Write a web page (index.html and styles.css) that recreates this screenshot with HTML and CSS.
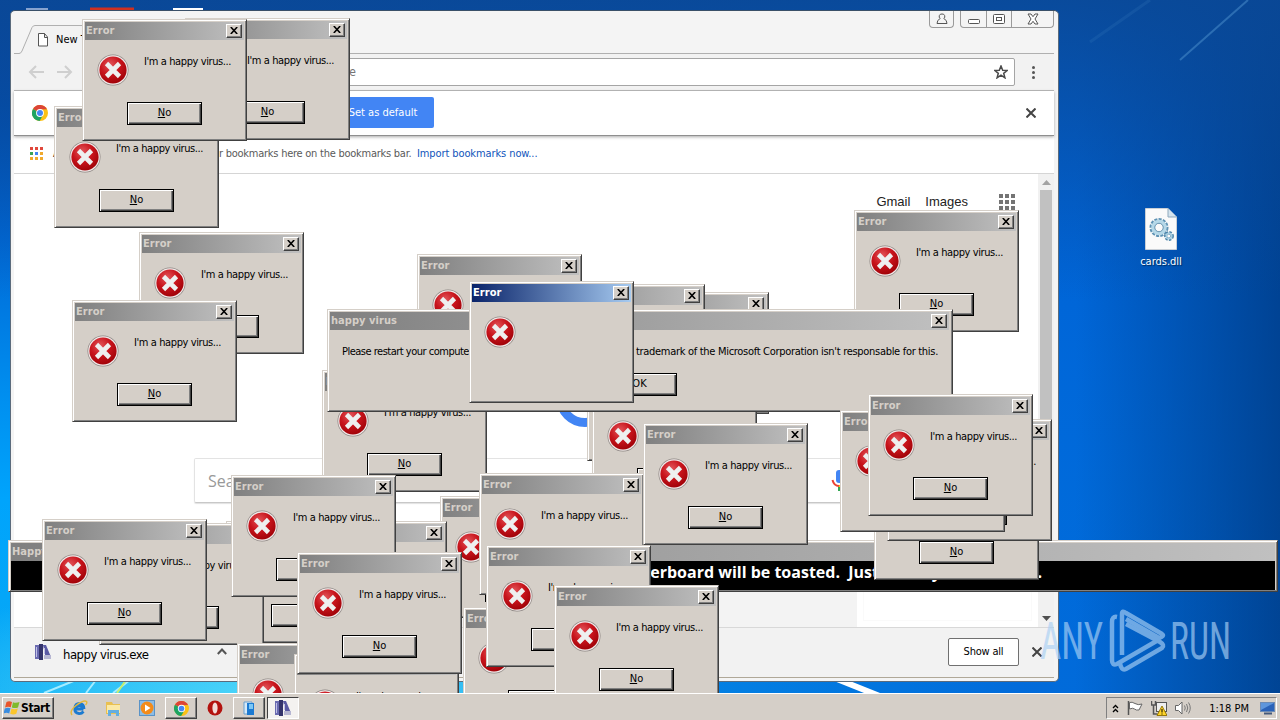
FILE: index.html
```
<!DOCTYPE html>
<html lang="en">
<head>
<meta charset="utf-8">
<title>Desktop</title>
<link rel="stylesheet" href="styles.css">
</head>
<body>

<svg class="defs">
    <defs>
        <radialGradient id="redBall" cx="40%" cy="30%" r="75%">
            <stop offset="0" stop-color="#e2555a"/>
            <stop offset="0.5" stop-color="#c8141c"/>
            <stop offset="1" stop-color="#9c0006"/>
        </radialGradient>
    </defs>
    <symbol id="errorIcon" viewBox="0 0 32 32">
        <circle cx="16" cy="16" r="15.5" fill="#8d8683"/>
        <circle cx="16" cy="16" r="14.8" fill="#f1e9e8"/>
        <circle cx="16" cy="16" r="13.6" fill="url(#redBall)"/>
        <path d="M9.5 9.5 22.5 22.5M22.5 9.5 9.5 22.5" stroke="#eef0f0" stroke-width="4.6"/>
    </symbol>
    <symbol id="closeX" viewBox="0 0 8 7">
        <path d="M.8 0 7.2 7M7.2 0 .8 7" stroke="#000" stroke-width="1.6"/>
    </symbol>
    <symbol id="chromeIcon" viewBox="0 0 16 16">
        <circle cx="8" cy="8" r="8" fill="#fbc116"/>
        <path d="M8 8 1 4A8 8 0 0 1 15 4.2L8 4.4Z" fill="#dc4437"/>
        <path d="M1 4A8 8 0 0 0 7.6 16L11 10 8 8Z" fill="#1da462"/>
        <circle cx="8" cy="8" r="3.9" fill="#fff"/>
        <circle cx="8" cy="8" r="3" fill="#4587f3"/>
    </symbol>
    <symbol id="exeIcon" viewBox="0 0 16 16">
        <path d="M0 1h4v14H0z" fill="#6a6ab0"/>
        <path d="M4 0h4v16H4z" fill="#34346c"/>
        <path d="M8 1h3l5 12v2h-5z" fill="#5a5aa4"/>
        <path d="M9 11h7v4H9z" fill="#b6b6d2"/>
        <path d="M1.5 3v10M9.5 4v6" stroke="#c0c0e6"/>
    </symbol>
</svg>

<div class="desktop" id="desktop">
    <svg class="wallpaper" viewBox="0 0 1280 693">
        <path d="M1180 60 1248 0" stroke="#4f93cf" stroke-width="2" opacity=".5"/>
        <path d="M1090 42 1150 0" stroke="#3d80c0" stroke-width="3" opacity=".2"/>
        <path d="M834 681 850 681 880 693 864 693Z" fill="#fff"/>
        <path d="M44 693 76 680M86 693 96 680M113 693 130 680" stroke="#a5ecff" stroke-width="2"/>
        <path d="M117 693 126 680" stroke="#c3ef6e" stroke-width="2"/>
        <path d="M26 9h22" stroke="#87a3cf" stroke-width="2"/>
        <path d="M90 9h44" stroke="#cf3020" stroke-width="3"/>
        <path d="M173 9h30" stroke="#fff" stroke-width="2"/>
    </svg>

    <div class="file">
        <svg width="32" height="42" viewBox="0 0 32 42">
            <path d="M.5.5H23L31.5 9V41.5H.5Z" fill="#fafafa" stroke="#c9cfd6"/>
            <path d="M23 .5V9h8.500" fill="#d5e4ee" stroke="#8fa9bd"/>
            <circle cx="14" cy="19.500" r="7" fill="none" stroke="#5f93b4" stroke-width="5" stroke-dasharray="2.600 1"/>
            <circle cx="14" cy="19.500" r="6" fill="none" stroke="#b5d8e8" stroke-width="3.500"/>
            <circle cx="14" cy="19.500" r="4.200" fill="none" stroke="#4b7f9f" stroke-width=".8"/>
            <circle cx="24" cy="28" r="3.200" fill="none" stroke="#4b83a8" stroke-width="3.500" stroke-dasharray="2 1"/>
            <circle cx="24" cy="28" r="2.800" fill="none" stroke="#a5cde0" stroke-width="1.500"/>
        </svg>
        <span>cards.dll</span>
    </div>

    <div class="browser">
        <div class="tabstrip">
            <svg class="tab" width="240" height="29" viewBox="0 0 240 29">
                <path d="M0 28.500H6L18 2.500Q19 .5 21 .5H240V29H0Z" fill="#f2f2f2"/>
                <path d="M0 28.500H5Q7 28.500 8 26L18 2.500Q19 .5 21 .5H240" fill="none" stroke="#b0b0b0"/>
                <path d="M24.500 8.500h6l3 3.500v9h-9zM30.500 8.500v4h3" fill="#fff" stroke="#555"/>
            </svg>
            <span class="tab-title">New Tab</span>
            <div class="caption">
                <div class="cap user">
                    <svg width="12" height="12" viewBox="0 0 12 12"><path d="M6 1a2.500 2.500 0 0 1 1.800 4.500Q11 7 11 10.500H1Q1 7 4.200 5.500A2.500 2.500 0 0 1 6 1Z" fill="none" stroke="#555"/></svg>
                </div>
                <div class="cap-group">
                    <div class="cap"><svg width="12" height="12" viewBox="0 0 12 12"><rect x=".5" y="6.500" width="11" height="4" rx="1" fill="#fff" stroke="#555"/></svg></div>
                    <div class="cap"><svg width="12" height="12" viewBox="0 0 12 12"><rect x=".5" y="1.500" width="11" height="9" rx="1" fill="#fff" stroke="#555"/><rect x="3.500" y="4.500" width="5" height="3" fill="none" stroke="#555"/></svg></div>
                    <div class="cap wide"><svg width="12" height="12" viewBox="0 0 12 12"><path d="M1 1h3l2 2.700L8 1h3L8 6l3 5H8L6 8.300 4 11H1l3-5Z" fill="#fff" stroke="#555"/></svg></div>
                </div>
            </div>
        </div>
        <div class="toolbar">
            <svg width="46" height="16" viewBox="0 0 46 16"><path d="M16 8H2M8 2 2 8l6 6M29 8h14M37 2l6 6-6 6" fill="none" stroke="#cfcfcf" stroke-width="2"/></svg>
            <div class="omnibox">
                <span>Search Google, or drag a page here</span>
                <svg width="14" height="14" viewBox="0 0 14 14"><path d="M7 1 8.700 5.300 13.200 5.500 9.700 8.300 10.900 12.800 7 10.200 3.100 12.800 4.300 8.300.8 5.500 5.300 5.300Z" fill="none" stroke="#4a4a4a" stroke-width="1.500"/></svg>
            </div>
            <div class="dots"><i></i><i></i><i></i></div>
        </div>
        <div class="infobar">
            <svg width="16" height="16"><use href="#chromeIcon"/></svg>
            <button class="blue-btn">Set as default</button>
            <svg class="bar-x" width="10" height="10" viewBox="0 0 10 10"><path d="M.5.5l9 9M9.500.5l-9 9" stroke="#444" stroke-width="2"/></svg>
        </div>
        <div class="bookmarks">
            <div class="apps"><i></i><i></i><i></i><i></i><i></i><i></i><i></i><i></i><i></i></div>
            <span class="apps-label">Apps</span>
            <span class="hint">r bookmarks here on the bookmarks bar.</span>
            <a>Import bookmarks now...</a>
        </div>
        <div class="page">
            <div class="page-main">
                <div class="google-nav">
                    <span>Gmail</span>
                    <span>Images</span>
                    <div class="launcher"><i></i><i></i><i></i><i></i><i></i><i></i><i></i><i></i><i></i></div>
                </div>
                <svg class="g-logo" width="60" height="60" viewBox="0 0 60 60"><circle cx="30" cy="30" r="24.500" fill="none" stroke="#4285f4" stroke-width="9"/></svg>
                <div class="searchbox">
                    <span>Search Google or type a URL</span>
                    <svg width="16" height="24" viewBox="0 0 16 24"><rect x="5" y="1" width="7" height="13" rx="3" fill="#4285f4"/><path d="M1.500 11Q3 17 8 17" fill="none" stroke="#ea4335" stroke-width="2"/><path d="M8 17q5 0 7-6" fill="none" stroke="#fbbc05" stroke-width="2"/><path d="M8 18v4" stroke="#34a853" stroke-width="2"/></svg>
                </div>
                <div class="page-foot"><div class="promo"></div></div>
            </div>
            <div class="scrollbar">
                <svg width="9" height="5" viewBox="0 0 9 5"><path d="M0 5 4.500 0 9 5Z" fill="#a3a3a3"/></svg>
                <div class="thumb"></div>
                <svg width="9" height="5" viewBox="0 0 9 5"><path d="M0 0H9L4.500 5Z" fill="#505050"/></svg>
            </div>
        </div>
        <div class="shelf">
            <svg width="16" height="16"><use href="#exeIcon"/></svg>
            <span class="dl-name">happy virus.exe</span>
            <svg class="chev" width="10" height="7" viewBox="0 0 10 7"><path d="M.8 6 5 1.500 9.200 6" fill="none" stroke="#555" stroke-width="2"/></svg>
            <button class="show-all">Show all</button>
            <svg width="10" height="10" viewBox="0 0 10 10"><path d="M.5.5l9 9M9.500.5l-9 9" stroke="#444" stroke-width="2"/></svg>
        </div>
    </div>

    <svg class="watermark" width="196" height="64" viewBox="0 0 196 64">
        <g fill="#a9d0f5" font-family="Roboto, sans-serif" font-size="52">
            <text x="2" y="50" textLength="63" lengthAdjust="spacingAndGlyphs">ANY</text>
            <text x="132" y="50" textLength="61" lengthAdjust="spacingAndGlyphs">RUN</text>
        </g>
        <g fill="none" stroke="#a9d0f5" stroke-width="4.500">
            <path d="M79 8Q74 7 74 13V51Q74 57 79 55L122 30"/>
            <path d="M84 46V5Q84 1 88 4L124 25Q127 27 121 29L88 10"/>
            <path d="M82 54Q83 62 88 60L124 39Q127 36 122 33L88 15"/>
        </g>
    </svg>

    <div class="win banner">
        <div class="title"><span>Happy virus</span></div>
        <div class="banner-body">
            <span class="b1">Your motherboard will be toasted.&nbsp; Just</span>
            <span class="b2">try to restart it.</span>
        </div>
    </div>
</div>

<div class="taskbar">
    <div class="start">
        <svg width="16" height="16" viewBox="0 0 16 16">
            <path d="M2.500 2Q5 .5 8 2L6.800 7.200Q4 6 1 7.400Z" fill="#e8542a"/>
            <path d="M9 2.300Q12 3.500 15.500 2L14 7.500Q11 8.600 7.800 7.500Z" fill="#7fba2c"/>
            <path d="M.8 8.400Q4 7 6.500 8.300L5.200 13.500Q2.500 12-.5 13.500Z" fill="#3a8de0"/>
            <path d="M7.500 8.600Q10.500 9.800 13.800 8.500L12.300 13.800Q9.500 15 6.200 13.800Z" fill="#fbc62c"/>
        </svg>
        <b>Start</b>
    </div>
    <div class="tasks">
        <div class="task">
            <svg width="18" height="16" viewBox="0 0 18 16"><path d="M13.500 9H5.500Q6 5.500 9 5.500T12.500 8M13.500 11.500Q11.500 13.800 9 13.500 4.500 13 4.800 8.500 5.200 3.500 9.500 3.500 14 4 14 9" fill="none" stroke="#1c7bd0" stroke-width="2.800"/><path d="M2 15Q-1 11 6 5.500 14-.5 16.500 1.500 17.500 3 15.500 5" fill="none" stroke="#e5b93a" stroke-width="1.400"/></svg>
        </div>
        <div class="task">
            <svg width="16" height="16" viewBox="0 0 16 16"><path d="M1 2h6l1 2h7v10H1z" fill="#e9c050"/><path d="M2 5h13v8H2z" fill="#fbe9a6"/><path d="M3 16V10h11v6h-3v-3H6v3z" fill="#64aee0"/></svg>
        </div>
        <div class="task">
            <svg width="16" height="16" viewBox="0 0 16 16"><rect x=".5" y=".5" width="15" height="15" fill="#8dbde6" stroke="#5a93c7"/><circle cx="8" cy="8" r="6.500" fill="#f38b1a"/><path d="M6 4.500 11.500 8 6 11.500Z" fill="#fff"/></svg>
        </div>
        <div class="task raised"><svg width="15" height="15"><use href="#chromeIcon"/></svg></div>
        <div class="task">
            <svg width="16" height="16" viewBox="0 0 16 16"><circle cx="8" cy="8" r="7.500" fill="#b3120e"/><ellipse cx="8" cy="8" rx="2.600" ry="5.500" fill="#f2dcd8"/></svg>
        </div>
        <div class="task raised">
            <svg width="14" height="16" viewBox="0 0 14 16"><path d="M2 2h8v12H2z" fill="#d4e9f8" stroke="#6aa0ce"/><path d="M5 3h7v12H5z" fill="#1c7ad2"/><path d="M7 4h4v5H7z" fill="#7cc7f5"/></svg>
        </div>
        <div class="task pressed"><svg width="16" height="16"><use href="#exeIcon"/></svg></div>
    </div>
    <div class="tray">
        <svg width="7" height="9" viewBox="0 0 7 9"><path d="M1 4 3.500 1.500 6 4M1 8 3.500 5.500 6 8" fill="none" stroke="#000" stroke-width="1.300"/></svg>
        <svg width="16" height="16" viewBox="0 0 16 16"><path d="M1.500 1v14" stroke="#555" stroke-width="1.500"/><path d="M2.500 2.500Q5 1.500 8 3.500T15 4L12 10Q9 10.500 7.500 9T2.500 9Z" fill="#fff" stroke="#666"/></svg>
        <svg width="16" height="16" viewBox="0 0 16 16"><rect x="5.500" y="2.500" width="10" height="9" fill="#eee" stroke="#555"/><path d="M.5 1v4h4V1M2.500 5v9h4" fill="none" stroke="#555" stroke-width="1.500"/><path d="M11 6 16 15.500H6Z" fill="#ffd428" stroke="#96780a"/><path d="M11 9v3.500M11 13.500v1" stroke="#000"/></svg>
        <svg width="17" height="14" viewBox="0 0 17 14"><path d="M.5 4.500h3L7 1v12L3.500 9.500h-3z" fill="#fff" stroke="#666"/><path d="M9.500 4.500q1.500 2.500 0 5M11.500 3q2.500 4 0 8M13.500 1.500q3.500 5.500 0 11" fill="none" stroke="#777"/></svg>
        <span class="clock">1:18 PM</span>
        <svg width="15" height="13" viewBox="0 0 15 13"><rect x=".5" y=".5" width="14" height="9" fill="#2a62b8" stroke="#6c8bb5"/><path d="M1 1h13L1 8z" fill="#5e96dc"/><path d="M4 11.500h8" stroke="#44597a" stroke-width="2"/></svg>
    </div>
</div>

<template id="errorBox">
    <div class="win dialog">
        <div class="title"><span>Error</span><div class="close"><svg width="8" height="7"><use href="#closeX"/></svg></div></div>
        <div class="row">
            <svg width="32" height="32"><use href="#errorIcon"/></svg>
            <p>I'm a happy virus...</p>
        </div>
        <div class="btn"><u>N</u>o</div>
    </div>
</template>

<template id="messageBox">
    <div class="win message">
        <div class="title"><span>happy virus</span><div class="close"><svg width="8" height="7"><use href="#closeX"/></svg></div></div>
        <div class="msg">
            <span class="head">Please restart your computer</span>
            <span>This trademark of the Microsoft Corporation isn't responsable for this.</span>
        </div>
        <div class="btn">OK</div>
    </div>
</template>

<script>
const desktop = document.getElementById('desktop');

function openBox(id, x, y, cls) {
    const box = document.getElementById(id).content.firstElementChild.cloneNode(true);
    box.style.left = x + 'px';
    box.style.top = y + 'px';
    if (cls) box.classList.add(cls);
    desktop.appendChild(box);
}

// bottom of the stack first
const under = [
    [185, 18], [54, 106], [82, 19],
    [139, 232], [72, 300],
    [604, 292], [540, 284], [417, 254],
    [587, 339], [592, 385], [322, 370], [854, 210]
];
const over = [
    [874, 458], [887, 419], [840, 410], [868, 394],
    [440, 496], [282, 521], [226, 521], [99, 523],
    [231, 475], [42, 519],
    [237, 643], [294, 654], [297, 552],
    [479, 473], [463, 607], [643, 423],
    [486, 545], [554, 585]
];

under.forEach(p => openBox('errorBox', p[0], p[1]));
openBox('messageBox', 327, 309);
over.forEach(p => openBox('errorBox', p[0], p[1]));
openBox('errorBox', 469, 281, 'active');
</script>

</body>
</html>
```
FILE: styles.css
```
* {
    box-sizing: border-box;
}

body {
    margin: 0;
    width: 1280px;
    height: 720px;
    overflow: hidden;
    display: flex;
    flex-direction: column;
    font-family: "DejaVu Sans Condensed", "DejaVu Sans", sans-serif;
    font-stretch: condensed;
    font-size: 11px;
    color: #000;
}

svg {
    display: block;
    flex: none;
}

.defs {
    position: absolute;
    width: 0;
    height: 0;
}

.desktop {
    flex: 1;
    position: relative;
    overflow: hidden;
    background:
        radial-gradient(ellipse 420px 130px at 300px 700px, #55dcfa, rgba(40, 190, 250, 0) 100%),
        linear-gradient(to right, rgba(0, 60, 140, 0) 84%, rgba(0, 55, 125, .75) 100%),
        linear-gradient(to right, rgba(0, 90, 205, 0) 10%, rgba(0, 100, 215, .9) 80%),
        linear-gradient(#0647a6 0, #0050b4 15%, #0068d6 34%, #0090f0 58%, #00a4fc 72%, #08a8f4 100%);
}

.desktop::before {
    content: "";
    position: absolute;
    top: 0;
    right: 0;
    width: 100%;
    height: 300px;
    background: linear-gradient(rgba(10, 72, 150, .9), rgba(0, 80, 180, 0));
}

.wallpaper {
    position: absolute;
    left: 0;
    top: 0;
    width: 1280px;
    height: 693px;
}

.file {
    position: absolute;
    left: 1121px;
    top: 208px;
    width: 80px;
    display: flex;
    flex-direction: column;
    align-items: center;
    gap: 5px;
    color: #fff;
    text-shadow: 1px 1px 1px #002b5c;
}

/* browser */

.browser {
    position: absolute;
    left: 10px;
    top: 10px;
    width: 1049px;
    height: 672px;
    padding: 0 4px 3px 3px;
    display: flex;
    flex-direction: column;
    background: #f4f4f4;
    border: 1px solid #5b6b7c;
    border-top-color: #3a5068;
    border-radius: 5px;
}

.tabstrip {
    position: relative;
    height: 43px;
    flex: none;
    display: flex;
    align-items: flex-end;
    border-bottom: 1px solid #b0b0b0;
}

.tab {
    margin-bottom: -1px;
}

.tab-title {
    position: absolute;
    left: 42px;
    top: 22px;
}

.caption {
    margin-left: auto;
    align-self: flex-start;
    display: flex;
    gap: 6px;
}

.cap-group {
    display: flex;
    border: 1px solid #9a9a9a;
    border-top: 0;
    border-radius: 0 0 4px 4px;
}

.cap {
    width: 25px;
    height: 16px;
    display: flex;
    justify-content: center;
    align-items: center;
}

.cap + .cap {
    border-left: 1px solid #9a9a9a;
}

.cap.wide {
    width: 42px;
}

.cap.user {
    height: 17px;
    border: 1px solid #9a9a9a;
    border-top: 0;
    border-radius: 0 0 4px 4px;
}

.toolbar {
    height: 37px;
    flex: none;
    display: flex;
    align-items: center;
    padding: 0 16px 0 14px;
    background: #f2f2f2;
    border-bottom: 1px solid #b4b4b4;
}

.omnibox {
    margin-left: 21px;
    width: 920px;
    height: 28px;
    padding: 0 6px 0 8px;
    display: flex;
    align-items: center;
    justify-content: space-between;
    background: #fff;
    border: 1px solid #a5a5a5;
    border-radius: 2px;
    font-size: 12px;
    color: #757575;
}

.omnibox span {
    width: 252px;
    text-align: right;
    white-space: nowrap;
}

.dots {
    margin-left: auto;
    margin-right: 3px;
    display: flex;
    flex-direction: column;
    gap: 2px;
}

.dots i {
    width: 3px;
    height: 3px;
    border-radius: 50%;
    background: #555;
}

.infobar {
    height: 45px;
    flex: none;
    display: flex;
    align-items: center;
    padding: 0 18px 1px;
    background: #fff;
    border-bottom: 1px solid #8f8f8f;
    box-shadow: 0 1px 3px #aaa;
    position: relative;
}

.blue-btn {
    margin-left: 284px;
    width: 102px;
    height: 31px;
    padding: 0;
    border: 0;
    border-radius: 2px;
    background: #4285f4;
    color: #fff;
    font: inherit;
}

.bar-x {
    margin-left: auto;
}

.bookmarks {
    height: 38px;
    flex: none;
    display: flex;
    align-items: center;
    padding: 0 15px 3px 16px;
    background: #fff;
    border-bottom: 1px solid #d5d5d5;
    color: #5a5a5a;
    white-space: nowrap;
    letter-spacing: -.1px;
}

.apps,
.launcher {
    display: grid;
    grid-template-columns: repeat(3, 3px);
    gap: 2px;
}

.apps i {
    width: 3px;
    height: 3px;
    background: #e0483c;
}

.apps i:nth-child(n+4) {
    background: #3da357;
}

.apps i:nth-child(5) {
    background: #4285f4;
}

.apps i:nth-child(n+6) {
    background: #f0a92c;
}

.apps-label {
    margin-left: 10px;
    width: 166px;
    color: #222;
}

.bookmarks .hint {
    width: 198px;
    letter-spacing: -.25px;
}

.bookmarks a {
    color: #1155bb;
}

.page {
    flex: 1;
    min-height: 0;
    display: flex;
    background: #fff;
}

.page-main {
    flex: 1;
    min-width: 0;
    display: flex;
    flex-direction: column;
    overflow: hidden;
}

.google-nav {
    height: 36px;
    margin-top: 9px;
    padding-right: 23px;
    display: flex;
    justify-content: flex-end;
    align-items: center;
    gap: 15px;
    font-family: "Liberation Sans", Arial, sans-serif;
    font-stretch: normal;
    font-size: 13px;
    color: #222;
}

.launcher {
    grid-template-columns: repeat(3, 4px);
    margin-left: 16px;
    margin-top: 1px;
}

.launcher i {
    width: 4px;
    height: 4px;
    background: #747474;
}

.g-logo {
    margin: 149px 0 0 541px;
    height: 60px;
}

.searchbox {
    margin: 30px 0 0 180px;
    width: 666px;
    height: 45px;
    flex: none;
    padding: 0 12px 0 13px;
    display: flex;
    align-items: center;
    justify-content: space-between;
    border: 1px solid #e3e3e3;
    border-bottom-color: #c8c8c8;
    border-radius: 2px;
    box-shadow: 0 1px 1px #e2e2e2;
    font: 16px "Open Sans", sans-serif;
    color: #999;
}

.page-foot {
    margin: auto 0 0 286px;
    height: 80px;
    background: #f3f3f3;
    display: flex;
    justify-content: flex-end;
}

.promo {
    width: 181px;
    border: 6px solid #fff;
    outline: 1px solid #fafafa;
    outline-offset: -7px;
    background: #fff;
}

.scrollbar {
    width: 16px;
    padding: 6px 0;
    display: flex;
    flex-direction: column;
    align-items: center;
    background: #f1f1f1;
}

.thumb {
    width: 12px;
    height: 282px;
    margin: 5px 0 auto;
    background: #c1c1c1;
}

.shelf {
    height: 51px;
    flex: none;
    display: flex;
    align-items: center;
    padding: 0 12px 2px 21px;
    background: #f2f2f2;
    border-top: 1px solid #d8d8d8;
    border-bottom: 1px solid #b0a898;
}

.dl-name {
    margin-left: 12px;
    padding-top: 5px;
    font-size: 13px;
    letter-spacing: -.5px;
    width: 154px;
}

.chev {
    margin-right: auto;
}

.show-all {
    width: 71px;
    height: 28px;
    margin-right: 13px;
    padding: 0;
    background: #fff;
    border: 1px solid #707070;
    border-radius: 2px;
    font: inherit;
    letter-spacing: -.2px;
}

.watermark {
    position: absolute;
    left: 1038px;
    top: 609px;
    opacity: .65;
}

/* classic windows */

.win {
    position: absolute;
    display: flex;
    flex-direction: column;
    background: #d5cfc8;
    border: 1px solid;
    border-color: #d5cfc8 #404040 #404040 #d5cfc8;
    box-shadow: inset 1px 1px #fff, inset -1px -1px #808080;
    padding: 2px;
}

.title {
    height: 18px;
    flex: none;
    display: flex;
    align-items: center;
    justify-content: space-between;
    padding: 0 2px 1px 1px;
    background: linear-gradient(to right, #808080, #c0c0c0);
    color: #d5cfc8;
    font-weight: bold;
    letter-spacing: .05px;
}

.close {
    width: 16px;
    height: 14px;
    display: flex;
    align-items: center;
    justify-content: center;
    background: #d5cfc8;
    border: 1px solid;
    border-color: #fff #404040 #404040 #fff;
    box-shadow: inset -1px -1px #808080;
}

.dialog {
    width: 165px;
    height: 122px;
}

.row {
    display: flex;
    align-items: flex-start;
    gap: 15px;
    padding: 14px 0 0 12px;
    white-space: nowrap;
}

.row p {
    margin: 1px 0 0;
    line-height: 13px;
    letter-spacing: -.4px;
}

.btn {
    width: 75px;
    height: 23px;
    margin: 16px auto 0;
    flex: none;
    line-height: 20px;
    text-align: center;
    background: #d5cfc8;
    border: 1px solid #000;
    box-shadow: inset 1px 1px #fff, inset -1px -1px #404040, inset -2px -2px #808080;
}

.active .title {
    background: linear-gradient(to right, #0a246a, #a6caf0);
    color: #fff;
}

.active p,
.active .btn {
    display: none;
}

.message {
    width: 626px;
    height: 103px;
    padding-right: 3px;
}

.msg {
    display: flex;
    justify-content: space-between;
    padding: 15px 11px 0 12px;
    line-height: 14px;
    white-space: nowrap;
    letter-spacing: -.3px;
}

.msg .head {
    letter-spacing: -.5px;
}

.message .btn {
    margin-top: 14px;
}

.banner {
    left: 8px;
    top: 540px;
    width: 1270px;
    height: 52px;
}

.banner-body {
    flex: 1;
    display: flex;
    align-items: center;
    padding-bottom: 7px;
    background: #000;
    color: #fff;
    font: bold 16px "Open Sans", sans-serif;
    white-space: nowrap;
}

.b1 {
    width: 868px;
    text-align: right;
}

.b2 {
    width: 163px;
    text-align: right;
}

/* taskbar */

.taskbar {
    height: 27px;
    flex: none;
    display: flex;
    align-items: center;
    padding: 2px 3px 0 2px;
    background: #d5cfc8;
    border-top: 1px solid #fff;
}

.start {
    width: 52px;
    height: 22px;
    display: flex;
    align-items: center;
    gap: 1px;
    padding-left: 1px;
    border: 1px solid;
    border-color: #fff #404040 #404040 #fff;
    box-shadow: inset -1px -1px #808080;
    font-size: 12px;
    letter-spacing: -.4px;
}

.tasks {
    display: flex;
    gap: 2px;
    margin-left: 9px;
}

.task {
    width: 32px;
    height: 22px;
    display: flex;
    align-items: center;
    justify-content: center;
}

.raised {
    border: 1px solid;
    border-color: #fff #404040 #404040 #fff;
    box-shadow: inset -1px -1px #808080;
}

.pressed {
    background: #f4f2f0;
    border: 1px solid;
    border-color: #404040 #fff #fff #404040;
}

.tray {
    margin-left: auto;
    width: 171px;
    height: 22px;
    display: flex;
    align-items: center;
    padding: 0 1px 0 5px;
    gap: 8px;
    border: 1px solid;
    border-color: #808080 #fff #fff #808080;
}

.clock {
    margin-left: auto;
    margin-right: 3px;
    white-space: nowrap;
}
```
